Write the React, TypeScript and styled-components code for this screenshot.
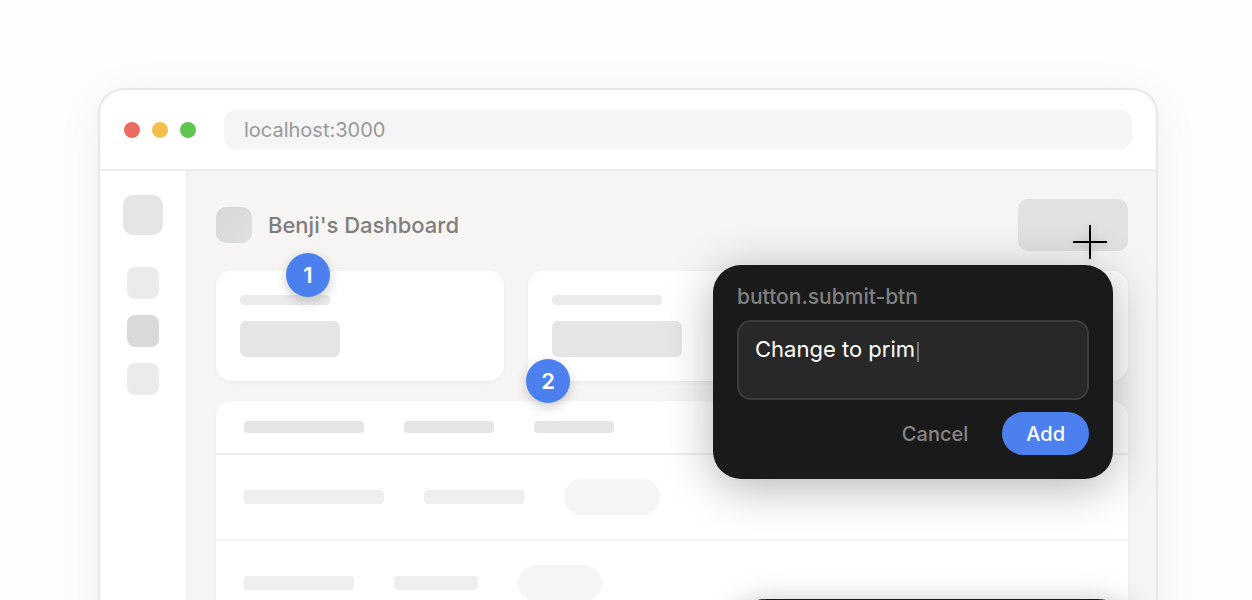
import React, { useLayoutEffect, useRef, useState } from "react";
import styled, { createGlobalStyle } from "styled-components";

const GlobalStyle = createGlobalStyle`
  *, *::before, *::after { box-sizing: border-box; }
  body {
    margin: 0;
    background: #fdfdfd;
    font-family: Inter, "Liberation Sans", sans-serif;
    -webkit-font-smoothing: antialiased;
  }
  button, input, textarea { font: inherit; }
`;

const Stage = styled.div`
  display: flex;
  height: 100vh;
  overflow: hidden;
  padding: 88px 94px 0 98px;
`;

const BrowserWindow = styled.section`
  flex: 1;
  min-width: 0;
  display: flex;
  flex-direction: column;
  align-self: flex-start;
  background: #fff;
  border: 2px solid #e8e8e7;
  border-radius: 26px;
  box-shadow: 0 8px 48px rgba(0, 0, 0, 0.06);
`;

const Chrome = styled.header`
  display: flex;
  align-items: center;
  gap: 28px;
  padding: 20px 24px;
  border-bottom: 2px solid #eee;
`;

const Lights = styled.div`
  display: flex;
  gap: 12px;
`;

const Light = styled.span<{ $color: string }>`
  width: 16px;
  height: 16px;
  border-radius: 50%;
  background: ${(p) => p.$color};
`;

const Address = styled.input`
  flex: 1;
  min-width: 0;
  height: 39px;
  padding: 0 20px;
  border: 0;
  border-radius: 12px;
  outline: 0;
  background: #f5f5f5;
  color: #999;
  font-size: 20px;
`;

const Body = styled.div`
  display: flex;
`;

const Sidebar = styled.nav`
  display: flex;
  flex-direction: column;
  align-items: center;
  gap: 32px;
  width: 88px;
  padding-top: 24px;
  border-right: 2px solid #f0f0f0;
`;

const NavGroup = styled.div`
  display: flex;
  flex-direction: column;
  gap: 16px;
`;

const Tile = styled.span<{ $size: number; $color: string; $radius: number }>`
  flex: none;
  width: ${(p) => p.$size}px;
  height: ${(p) => p.$size}px;
  border-radius: ${(p) => p.$radius}px;
  background: ${(p) => p.$color};
`;

const Main = styled.main`
  position: relative;
  flex: 1;
  min-width: 0;
  display: flex;
  flex-direction: column;
  gap: 20px;
  padding: 28px;
  background: #f6f5f3;
`;

const TitleRow = styled.div`
  display: flex;
  align-items: center;
  gap: 16px;
`;

const Title = styled.h1`
  flex: 1;
  margin: 0;
  color: #7f7e7d;
  font-size: 22px;
  font-weight: 500;
  line-height: 28px;
`;

const Target = styled.div`
  position: relative;
  z-index: 2;
`;

const SubmitButton = styled.button`
  display: block;
  width: 110px;
  height: 52px;
  border: 0;
  border-radius: 10px;
  background: #e2e1df;
`;

const Crosshair = styled.svg`
  position: absolute;
  top: 26px;
  left: 55px;
  width: 34px;
  height: 34px;
  filter: drop-shadow(0 2px 4px rgba(0, 0, 0, 0.2));
`;

const Cards = styled.div`
  display: grid;
  grid-template-columns: repeat(3, 1fr);
  gap: 24px;
`;

const Card = styled.div`
  position: relative;
  display: flex;
  flex-direction: column;
  gap: 16px;
  padding: 24px;
  border-radius: 16px;
  background: #fff;
  box-shadow: 0 2px 4px rgba(0, 0, 0, 0.03);
`;

const Bar = styled.span<{ $w: number; $h: number; $color: string; $radius?: number }>`
  flex: none;
  width: ${(p) => p.$w}px;
  height: ${(p) => p.$h}px;
  border-radius: ${(p) => p.$radius ?? 4}px;
  background: ${(p) => p.$color};
`;

const Marker = styled.button<{ $top: number; $left: number }>`
  position: absolute;
  z-index: 1;
  top: ${(p) => p.$top}px;
  left: ${(p) => p.$left}px;
  width: 44px;
  height: 44px;
  padding: 0;
  border: 0;
  border-radius: 50%;
  background: #4c80ee;
  box-shadow: 0 4px 12px rgba(0, 0, 0, 0.2);
  color: #fff;
  font-size: 22px;
  font-weight: 600;
  line-height: 44px;
  text-align: center;
`;

const Panel = styled.div`
  border-radius: 16px;
  background: #fff;
  box-shadow: 0 2px 4px rgba(0, 0, 0, 0.03);
`;

const PanelRow = styled.div<{ $head?: boolean }>`
  display: flex;
  align-items: center;
  gap: 40px;
  padding: ${(p) => (p.$head ? "20px 28px" : "24px 28px")};
  border-bottom: 2px solid ${(p) => (p.$head ? "#eee" : "#f5f5f5")};
`;

const Popover = styled.form`
  position: absolute;
  top: 66px;
  right: 15px;
  display: flex;
  flex-direction: column;
  width: 400px;
  padding: 20px 24px 24px;
  border-radius: 28px;
  background: #1a1a1a;
  box-shadow: 0 8px 48px rgba(0, 0, 0, 0.3);
`;

const Selector = styled.label`
  margin-bottom: 11px;
  color: #808080;
  font-size: 21px;
  font-weight: 500;
  line-height: 24px;
`;

const Field = styled.div`
  position: relative;
  height: 80px;
  margin-bottom: 12px;
`;

const Comment = styled.textarea`
  display: block;
  width: 100%;
  height: 100%;
  padding: 12px 16px;
  border: 2px solid #3c3c3c;
  border-radius: 14px;
  outline: 0;
  resize: none;
  background: #282828;
  color: #fff;
  font-size: 22px;
  line-height: 30px;
`;

const Caret = styled.span`
  position: absolute;
  top: 22px;
  width: 2px;
  height: 20px;
  margin-left: 20px;
  background: #777;
`;

const Actions = styled.div`
  display: flex;
  justify-content: flex-end;
  gap: 10px;
`;

const Action = styled.button<{ $primary?: boolean }>`
  height: 43px;
  padding: 0 24px;
  border: 0;
  border-radius: 22px;
  background: ${(p) => (p.$primary ? "#4c80ee" : "transparent")};
  color: ${(p) => (p.$primary ? "#fff" : "#858585")};
  font-size: 20px;
  font-weight: 500;
`;

const Toolbar = styled.div`
  position: absolute;
  z-index: 2;
  top: 428px;
  right: 15px;
  width: 418px;
  height: 88px;
  border-radius: 44px;
  background: #1a1a1a;
  box-shadow: 0 4px 32px rgba(0, 0, 0, 0.25);
`;

const stats = [
  { label: 90, value: 100 },
  { label: 110, value: 130 },
  { label: 80, value: 90 },
];

const rows = [
  { name: 140, detail: 100, status: 96 },
  { name: 110, detail: 84, status: 84 },
  { name: 130, detail: 96, status: 96 },
];

function CommentField() {
  const [text, setText] = useState("Change to prim");
  const [textWidth, setTextWidth] = useState(0);
  const ref = useRef<HTMLTextAreaElement>(null);

  useLayoutEffect(() => {
    const ctx = document.createElement("canvas").getContext("2d");
    if (!ctx || !ref.current) return;
    const style = getComputedStyle(ref.current);
    ctx.font = `${style.fontWeight} ${style.fontSize} ${style.fontFamily}`;
    setTextWidth(Math.round(ctx.measureText(text).width));
  }, [text]);

  return (
    <Field>
      <Comment
        id="comment"
        ref={ref}
        value={text}
        onChange={(e) => setText(e.target.value)}
      />
      <Caret style={{ left: textWidth }} />
    </Field>
  );
}

export default function App() {
  return (
    <>
      <GlobalStyle />
      <Stage>
        <BrowserWindow>
          <Chrome>
            <Lights>
              <Light $color="#ed6a5e" />
              <Light $color="#f5bf4f" />
              <Light $color="#61c554" />
            </Lights>
            <Address aria-label="Address" defaultValue="localhost:3000" />
          </Chrome>
          <Body>
            <Sidebar>
              <Tile $size={40} $radius={10} $color="#e5e5e5" />
              <NavGroup>
                <Tile $size={32} $radius={8} $color="#ebebeb" />
                <Tile $size={32} $radius={8} $color="#d9d9d9" />
                <Tile $size={32} $radius={8} $color="#ebebeb" />
              </NavGroup>
            </Sidebar>
            <Main>
              <TitleRow>
                <Tile
                  $size={36}
                  $radius={10}
                  $color="linear-gradient(135deg, #d6d6d5, #e0e0df)"
                />
                <Title>Benji's Dashboard</Title>
                <Target>
                  <SubmitButton type="button" aria-label="Submit" />
                  <Popover onSubmit={(e) => e.preventDefault()}>
                    <Selector htmlFor="comment">button.submit-btn</Selector>
                    <CommentField />
                    <Actions>
                      <Action type="button">Cancel</Action>
                      <Action type="submit" $primary>
                        Add
                      </Action>
                    </Actions>
                  </Popover>
                  <Crosshair viewBox="0 0 34 34" aria-hidden="true">
                    <path d="M17 0V34M0 17H34" stroke="#000" strokeWidth="2" />
                  </Crosshair>
                </Target>
              </TitleRow>
              <Cards>
                {stats.map((s, i) => (
                  <Card key={i}>
                    <Bar $w={s.label} $h={10} $color="#ebebeb" />
                    <Bar $w={s.value} $h={36} $radius={6} $color="#e5e5e5" />
                    {i === 0 && (
                      <Marker type="button" $top={-18} $left={70}>
                        1
                      </Marker>
                    )}
                    {i === 1 && (
                      <Marker type="button" $top={88} $left={-2}>
                        2
                      </Marker>
                    )}
                  </Card>
                ))}
              </Cards>
              <Panel>
                <PanelRow $head>
                  <Bar $w={120} $h={12} $color="#e5e5e5" />
                  <Bar $w={90} $h={12} $color="#e5e5e5" />
                  <Bar $w={80} $h={12} $color="#e5e5e5" />
                </PanelRow>
                {rows.map((r, i) => (
                  <PanelRow key={i}>
                    <Bar $w={r.name} $h={14} $color="#efefef" />
                    <Bar $w={r.detail} $h={14} $color="#efefef" />
                    <Bar $w={r.status} $h={36} $radius={18} $color="#f5f5f5" />
                  </PanelRow>
                ))}
              </Panel>
              <Toolbar />
            </Main>
          </Body>
        </BrowserWindow>
      </Stage>
    </>
  );
}
